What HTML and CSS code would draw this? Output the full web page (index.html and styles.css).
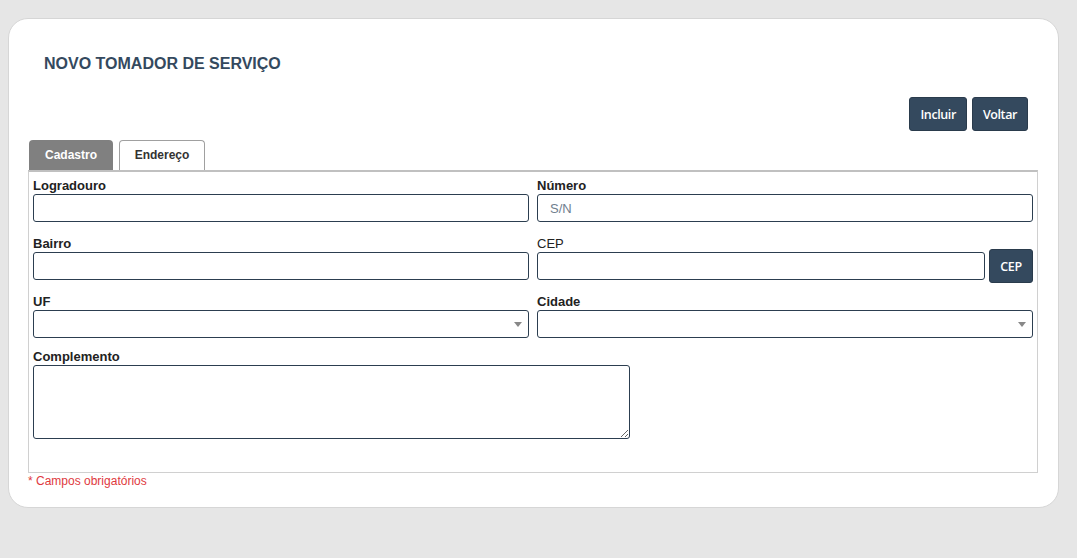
FILE: index.html
```html
<!DOCTYPE html>
<html lang="pt-BR">
<head>
<meta charset="utf-8">
<title>Novo Tomador de Serviço</title>
<link rel="stylesheet" href="styles.css">
</head>
<body>
<div class="card">
  <h1 class="title">NOVO TOMADOR DE SERVIÇO</h1>
  <div class="actions">
    <button class="btn" type="button">Incluir</button>
    <button class="btn" type="button">Voltar</button>
  </div>
  <div class="tabs">
    <div class="tab tab-gray">Cadastro</div>
    <div class="tab tab-white">Endereço</div>
  </div>
  <div class="panel">
    <div class="row">
      <div class="group">
        <label class="label">Logradouro</label>
        <input class="input" type="text">
      </div>
      <div class="group">
        <label class="label">Número</label>
        <input class="input" type="text" placeholder="S/N">
      </div>
    </div>
    <div class="row">
      <div class="group">
        <label class="label">Bairro</label>
        <input class="input" type="text">
      </div>
      <div class="group">
        <label class="label label-normal">CEP</label>
        <div class="inline">
          <input class="input" type="text">
          <button class="btn btn-cep" type="button">CEP</button>
        </div>
      </div>
    </div>
    <div class="row row-tight">
      <div class="group">
        <label class="label">UF</label>
        <div class="select-wrap"><select class="input select"><option></option></select></div>
      </div>
      <div class="group">
        <label class="label">Cidade</label>
        <div class="select-wrap"><select class="input select"><option></option></select></div>
      </div>
    </div>
    <div class="row-single">
      <label class="label">Complemento</label>
      <textarea class="textarea"></textarea>
    </div>
  </div>
  <div class="required">* Campos obrigatórios</div>
</div>
</body>
</html>
```

FILE: styles.css
```css
html, body {
  margin: 0;
  padding: 0;
  background: #e6e6e6;
  font-family: "Liberation Sans", Arial, sans-serif;
}

.card {
  box-sizing: border-box;
  width: 1051px;
  height: 490px;
  margin: 18px 0 0 8px;
  padding: 0 20px 0 19px;
  background: #ffffff;
  border: 1px solid #d6d6d6;
  border-radius: 20px;
}

.title {
  margin: 36px 0 0 16px;
  font-size: 16px;
  line-height: 18px;
  font-weight: bold;
  color: #34495e;
}

.actions {
  display: flex;
  justify-content: flex-end;
  gap: 5px;
  margin-top: 24px;
  padding-right: 10px;
}

.btn {
  box-sizing: border-box;
  height: 34px;
  padding: 0 10px;
  background: #34495e;
  color: #ffffff;
  border: 1px solid #2a3b4c;
  border-radius: 3px;
  font-family: "Open Sans", sans-serif;
  font-size: 12.5px;
  font-weight: 600;
  letter-spacing: -0.4px;
  cursor: pointer;
}

.tabs {
  display: flex;
  gap: 6px;
  margin-top: 9px;
  padding-left: 1px;
}

.tab {
  box-sizing: border-box;
  height: 30px;
  line-height: 30px;
  font-size: 12px;
  font-weight: bold;
  text-align: center;
  border-radius: 4px 4px 0 0;
}

.tab-gray {
  width: 84px;
  background: #808080;
  color: #ffffff;
}

.tab-white {
  width: 86px;
  background: #ffffff;
  color: #333333;
  border: 1px solid #a0a0a0;
  border-bottom: none;
  line-height: 29px;
}

.panel {
  border: 1px solid #d0d0d0;
  border-top: 2px solid #c0c0c0;
  padding: 6px 4px 33px 4px;
}

.row {
  display: grid;
  grid-template-columns: 496px 496px;
  column-gap: 8px;
  margin-bottom: 14px;
}

.row-tight {
  margin-bottom: 11px;
}

.group {
  display: flex;
  flex-direction: column;
}

.label {
  display: block;
  font-size: 13px;
  line-height: 16px;
  font-weight: bold;
  color: #222222;
}

.label-normal {
  font-weight: normal;
}

.input {
  box-sizing: border-box;
  width: 100%;
  height: 28px;
  margin: 0;
  padding: 0 12px;
  border: 1px solid #2c3e50;
  border-radius: 3px;
  background: #ffffff;
  font-family: "Liberation Sans", Arial, sans-serif;
  font-size: 13px;
  color: #333333;
  outline: none;
}

.input::placeholder {
  color: #6f7e8e;
}

.inline {
  display: flex;
  align-items: center;
  gap: 4px;
}

.inline .input {
  flex: 1;
}

.btn-cep {
  width: 44px;
  margin: -3px 0;
  padding: 0;
  flex: none;
}

.select-wrap {
  position: relative;
}

.select {
  appearance: none;
  -webkit-appearance: none;
  display: block;
}

.select-wrap::after {
  content: "";
  position: absolute;
  right: 7px;
  top: 12px;
  border-left: 4px solid transparent;
  border-right: 4px solid transparent;
  border-top: 5px solid #888888;
}

.row-single {
  display: flex;
  flex-direction: column;
}

.textarea {
  box-sizing: border-box;
  width: 597px;
  height: 74px;
  margin: 0;
  border: 1px solid #2c3e50;
  border-radius: 3px;
  font-family: "Liberation Sans", Arial, sans-serif;
  font-size: 13px;
  outline: none;
}

.required {
  margin-top: 1px;
  font-size: 12px;
  line-height: 15px;
  color: #e0393e;
}
```
